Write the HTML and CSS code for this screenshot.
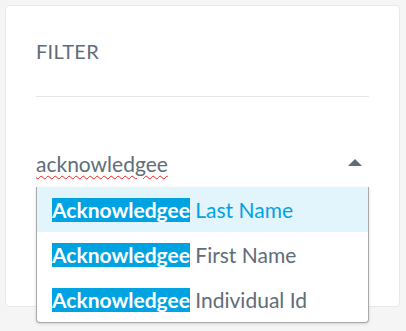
FILE: index.html
```html
<!DOCTYPE html>
<html lang="en">
<head>
  <meta charset="UTF-8" />
  <meta name="viewport" content="width=device-width, initial-scale=1" />
  <title>Filter</title>
  <link rel="stylesheet" href="styles.css">
</head>
<body>
  <!-- Filter Card -->
  <section class="card">
    <h2 class="card-title">FILTER</h2>
    <hr class="divider">

    <div class="combo">
      <div class="combo-input">
        <span class="combo-value">acknowledgee</span>
        <span class="caret"></span>
      </div>

      <ul class="combo-menu">
        <li class="combo-item active"><mark>Acknowledgee</mark> Last Name</li>
        <li class="combo-item"><mark>Acknowledgee</mark> First Name</li>
        <li class="combo-item"><mark>Acknowledgee</mark> Individual Id</li>
      </ul>
    </div>
  </section>
</body>
</html>
```

FILE: styles.css
```css
:root {
  --text-gray: #5e6d78;
  --accent: #00a3e2;
  --row-active: #e2f4fc;
  --line: #e6e6e6;
}

* {
  margin: 0;
  padding: 0;
  box-sizing: border-box;
}
body {
  font-family: Lato, "Open Sans", sans-serif;
  background-color: #f5f5f5;
  color: var(--text-gray);
  padding: 5px 6px 24px 5px;
}

/* Card */
.card {
  background-color: #fff;
  border: 1px solid #e9e9e9;
  border-radius: 4px;
  height: 302px;
  padding: 34px 30px 0 30px;
}
.card-title {
  font-size: 20px;
  font-weight: 400;
  letter-spacing: 0.3px;
  line-height: 22px;
  color: var(--text-gray);
}
.divider {
  border: none;
  border-top: 1px solid var(--line);
  margin-top: 34px;
}

/* Combo box */
.combo {
  position: relative;
  margin-top: 54px;
}
.combo-input {
  display: flex;
  align-items: center;
  justify-content: space-between;
  height: 26px;
}
.combo-value {
  font-size: 21px;
  line-height: 26px;
  text-decoration: underline wavy #e22;
  text-decoration-thickness: 1px;
  text-underline-offset: 3px;
}
.caret {
  width: 0;
  height: 0;
  border-left: 7.5px solid transparent;
  border-right: 7.5px solid transparent;
  border-bottom: 7px solid var(--text-gray);
  margin-right: 7px;
  margin-top: -4px;
}

.combo-menu {
  position: absolute;
  top: 36px;
  left: 0;
  right: 0;
  list-style: none;
  background-color: #fff;
  border: 1px solid #a9a9a9;
  border-top: none;
  border-radius: 0 0 4px 4px;
  box-shadow: 0 1px 3px rgba(0,0,0,0.15);
}
.combo-item {
  height: 45px;
  display: flex;
  align-items: center;
  padding-left: 15px;
  font-size: 21px;
  white-space: pre;
}
.combo-item.active {
  background-color: var(--row-active);
  color: var(--accent);
}
.combo-item mark {
  background-color: var(--accent);
  color: #fff;
  font-weight: 700;
  line-height: 24px;
}
```
